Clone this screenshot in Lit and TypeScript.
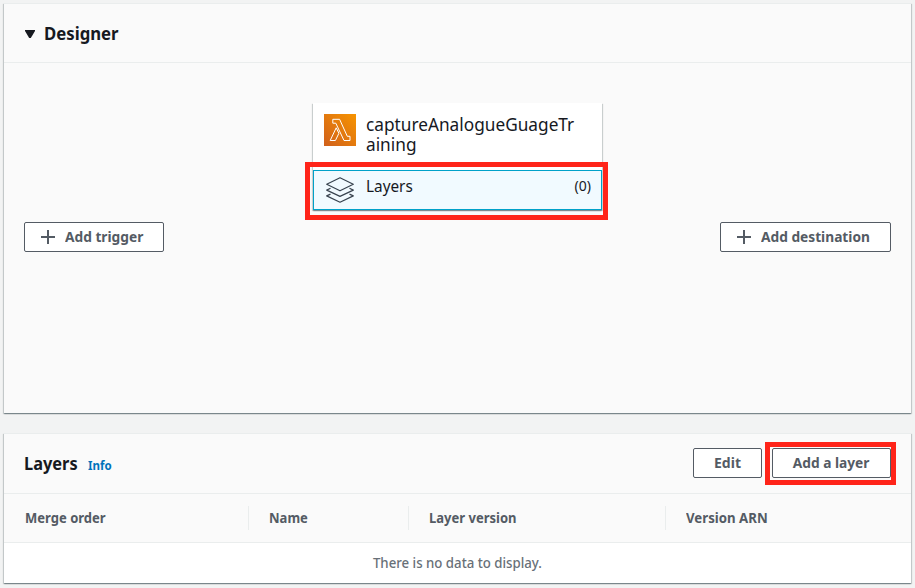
import { LitElement, html, css } from "lit";
import { customElement } from "lit/decorators.js";

@customElement("app-root")
export class AppRoot extends LitElement {
  static styles = css`
    :host {
      display: block;
      box-sizing: border-box;
      height: 588px;
      padding: 3px 4px 0;
      overflow: hidden;
      background: #f2f3f3;
      color: #16191f;
      font-family: "Noto Sans", "Open Sans", sans-serif;
      font-size: 14px;
      line-height: 20px;
    }
    * { box-sizing: border-box; }
    .panel {
      width: 907px;
      background: #fafafa;
      border-top: 1px solid #eaeded;
      box-shadow: 0 1px 1px 0 rgba(0, 28, 36, 0.3), 1px 1px 1px 0 rgba(0, 28, 36, 0.15),
        -1px 1px 1px 0 rgba(0, 28, 36, 0.15);
    }
    .designer { height: 410px; margin-bottom: 20px; }
    .head { display: flex; align-items: center; border-bottom: 1px solid #eaeded; }
    .designer .head { height: 59px; padding: 0 20px 0 21px; gap: 9px; }
    .caret { margin-top: 2px; }
    .t { display: inline-block; white-space: nowrap; transform-origin: 0 50%; }
    .t-designer { transform: scaleX(0.93); }
    .t-h2 { transform: scaleX(0.91); }
    .t-trigger, .t-dest { transform: scaleX(0.98); }
    .t-fn, .t-layers { transform: scaleX(0.958); }
    .t-add { transform: scaleX(0.98); transform-origin: 50% 50%; }
    .t-th { transform: scaleX(0.93); }
    .t-arn { transform: scaleX(0.945); }
    .t-info { transform: scaleX(0.96); }
    .t-empty { transform: scaleX(0.945); transform-origin: 50% 50%; font-weight: 500; }
    h2 { margin: 0; font-size: 18px; line-height: 22px; font-weight: 700; }
    .canvas { display: flex; justify-content: space-between; align-items: flex-start; padding: 0 20px; }
    .canvas .btn { margin-top: 159px; justify-content: flex-start; padding-left: 16px; }
    .btn {
      display: flex;
      align-items: center;
      justify-content: center;
      height: 30px;
      padding: 0;
      border: 1px solid #545b64;
      border-radius: 2px;
      background: #fff;
      color: #545b64;
      font: 700 14px/20px "Noto Sans", "Open Sans", sans-serif;
    }
    .plus { margin-right: 10px; }
    .trigger { width: 140px; }
    .dest { width: 171px; }
    .fn {
      width: 289px;
      height: 107px;
      margin: 40px 0 0 31px;
      background: #fff;
      box-shadow: 0 1px 1px 0 rgba(0, 28, 36, 0.3), 1px 1px 1px 0 rgba(0, 28, 36, 0.15),
        -1px 1px 1px 0 rgba(0, 28, 36, 0.15);
    }
    .fn-top { display: flex; gap: 10px; height: 67px; padding: 11px 11px 0; }
    .fn-name { font-size: 18px; line-height: 20px; }
    .layers {
      position: relative;
      display: flex;
      height: 40px;
      padding: 6px 10px 0 12px;
      border: 1px solid #00a1c9;
      background: #f1faff;
    }
    .layers .name { flex: 1; margin: -1px 0 0 12px; font-size: 16px; }
    .layers .count { margin-top: -1px; font-size: 14px; }
    .mark { position: absolute; border: 5px solid #ff2419; pointer-events: none; }
    .layers .mark { inset: -9px -7px -11px -9px; }
    .table .head { height: 60px; padding: 0 20px 2px; }
    .table { height: 150px; }
    .info { flex: 1; margin: 7px 0 0 5px; color: #0073bb; font-size: 12px; line-height: 16px; font-weight: 700; }
    .edit { width: 69px; margin-right: 10px; }
    .add { position: relative; width: 119px; }
    .add .mark { inset: -7px -6px -8px -8px; }
    .cols {
      display: grid;
      grid-template-columns: 245px 160px 257px 1fr;
      align-items: center;
      height: 49px;
      border-bottom: 1px solid #eaeded;
      color: #545b64;
      font-weight: 700;
    }
    .col { height: 24px; padding: 0 0 0 20px; line-height: 24px; border-right: 1px solid #eaeded; }
    .col:first-child { padding-left: 21px; }
    .col:last-child { border: 0; }
    .empty { height: 40px; background: #fff; color: #687078; text-align: center; line-height: 40px; }
  `;

  private plus() {
    return html`<svg class="plus" width="14" height="14" viewBox="0 0 14 14">
      <path d="M7 0V14M0 7H14" stroke="#545b64" stroke-width="2" />
    </svg>`;
  }

  render() {
    return html`
      <section class="panel designer">
        <div class="head">
          <svg class="caret" width="10" height="8" viewBox="0 0 10 8"><path d="M0 0H10V1L5.8 8H4.2L0 1Z" fill="#16191f" /></svg>
          <h2><span class="t t-designer">Designer</span></h2>
        </div>
        <div class="canvas">
          <button class="btn trigger">${this.plus()}<span class="t t-trigger">Add trigger</span></button>
          <div class="fn">
            <div class="fn-top">
              <svg width="32" height="32" viewBox="0 0 32 32">
                <defs>
                  <linearGradient id="g" x1="0" y1="1" x2="1" y2="0">
                    <stop offset="0" stop-color="#d0601c" />
                    <stop offset="1" stop-color="#f79400" />
                  </linearGradient>
                </defs>
                <rect width="32" height="32" fill="url(#g)" />
                <path
                  d="M6.2 26.5L12.2 13.8L14.9 19.3L11.4 26.5ZM8.8 5.3V9.2H11.8L20 26.5H26V22.3H23.3L15.6 5.3Z"
                  fill="none" stroke="#fff" stroke-width="1" stroke-linejoin="round"
                />
              </svg>
              <div class="fn-name"><span class="t t-fn">captureAnalogueGuageTr<br />aining</span></div>
            </div>
            <div class="layers">
              <svg width="28" height="26" viewBox="0 0 28 26">
                <g fill="none" stroke="#38434f" stroke-width="1.2" stroke-linejoin="round">
                  <path d="M14 .8L27.3 7.3L14 13.8L.7 7.3Z" />
                  <path d="M4.5 11.3L.7 13.1L14 19.4L27.3 13.1L23.5 11.3" />
                  <path d="M4.5 17.1L.7 18.9L14 25.2L27.3 18.9L23.5 17.1" />
                </g>
              </svg>
              <span class="name"><span class="t t-layers">Layers</span></span>
              <span class="count">(0)</span>
              <div class="mark"></div>
            </div>
          </div>
          <button class="btn dest">${this.plus()}<span class="t t-dest">Add destination</span></button>
        </div>
      </section>
      <section class="panel table">
        <div class="head">
          <h2><span class="t t-h2">Layers</span></h2>
          <span class="info"><span class="t t-info">Info</span></span>
          <button class="btn edit">Edit</button>
          <button class="btn add"><span class="t t-add">Add a layer</span><span class="mark"></span></button>
        </div>
        <div class="cols">
          <div class="col"><span class="t t-th">Merge order</span></div>
          <div class="col"><span class="t t-th">Name</span></div>
          <div class="col"><span class="t t-th">Layer version</span></div>
          <div class="col"><span class="t t-arn">Version ARN</span></div>
        </div>
        <div class="empty"><span class="t t-empty">There is no data to display.</span></div>
      </section>
    `;
  }
}
